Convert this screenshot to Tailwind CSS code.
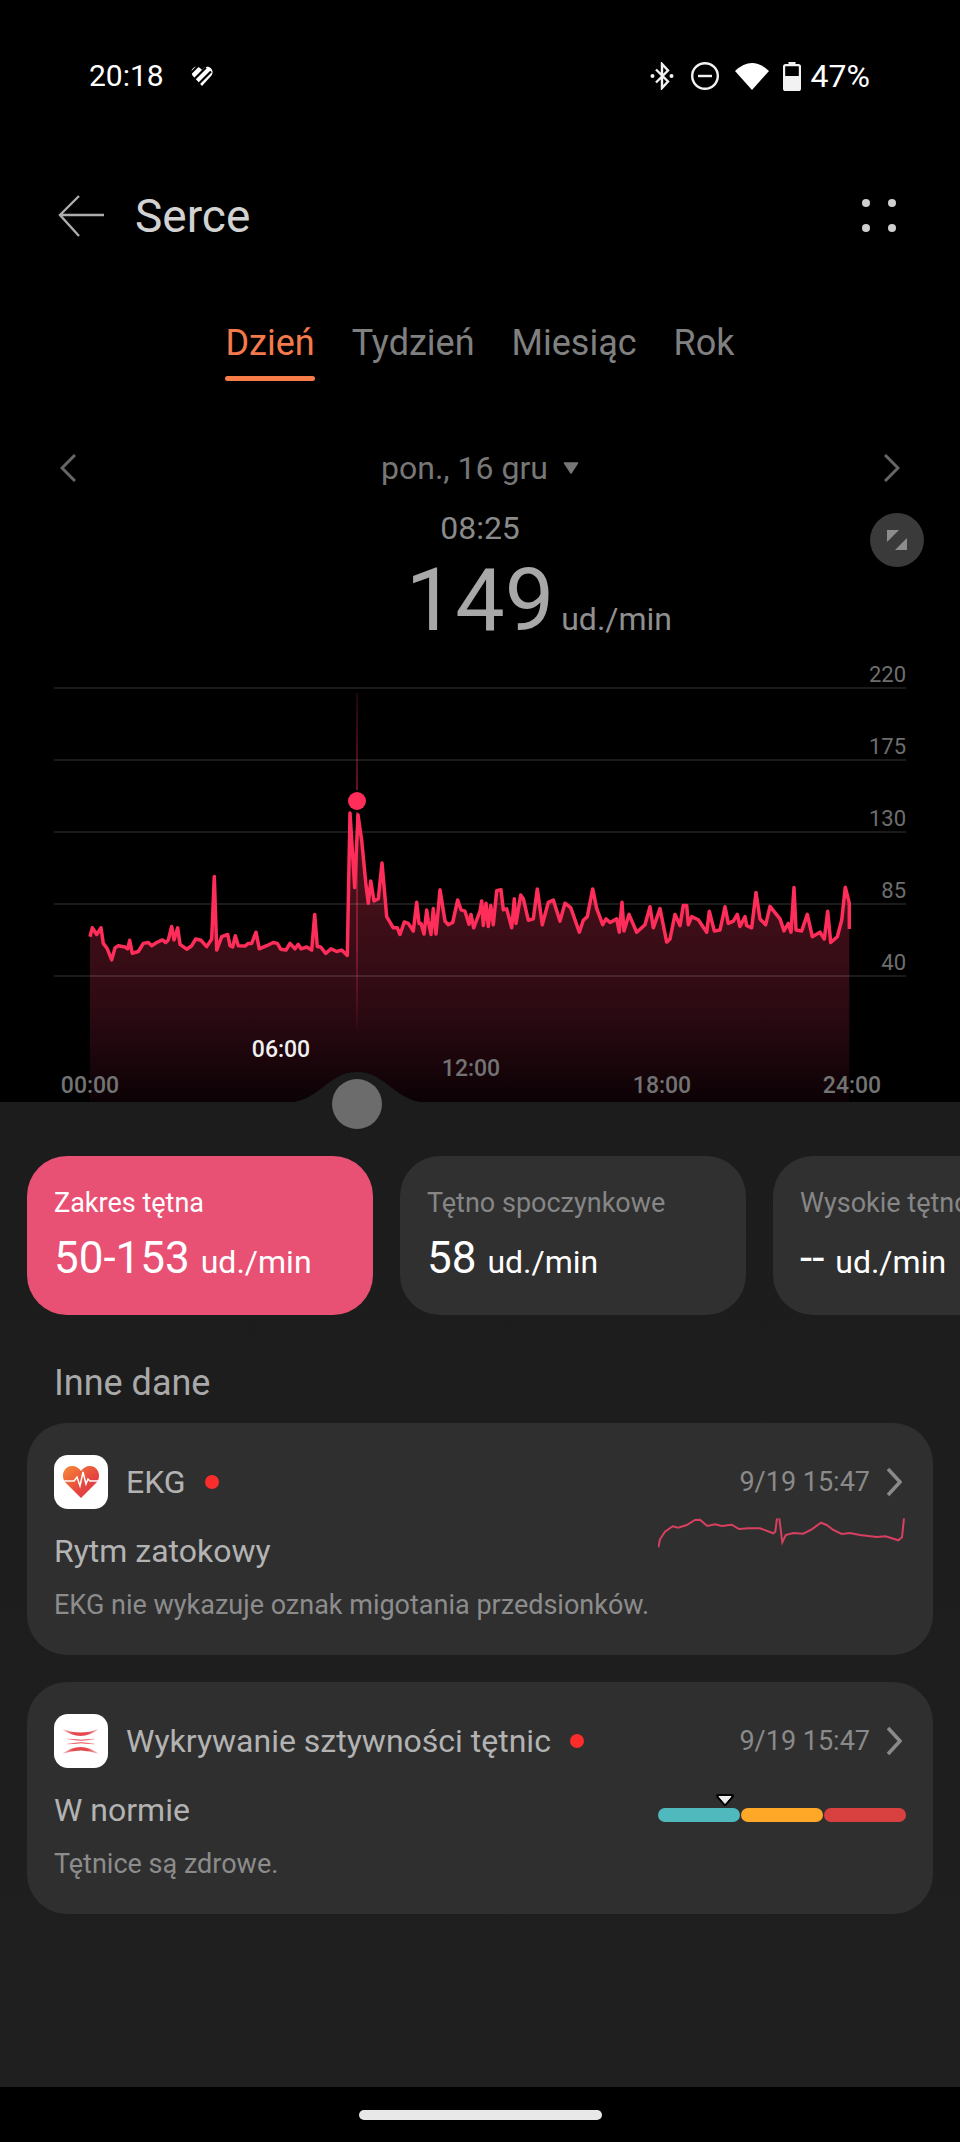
<!DOCTYPE html>
<html lang="pl">
<head>
  <meta charset="UTF-8" />
  <meta name="viewport" content="width=device-width, initial-scale=1.0"/>
  <title>Serce</title>
  <script src="https://cdn.jsdelivr.net/npm/@tailwindcss/browser@4"></script>
</head>
<body class="bg-black">
<div class="w-[960px] h-[2142px] flex flex-col bg-black overflow-hidden font-['Roboto',sans-serif]">

  <!-- Status bar -->
  <div class="h-[100px] pt-[52px] pl-[89px] pr-[90px] flex items-center text-white">
    <span class="text-[30px] leading-[36px]">20:18</span>
    <svg class="ml-[26px]" width="24" height="22" viewBox="0 0 24 22">
      <path d="M12 21 L2.5 10.5 C-1 6 4.500 -1 10 3 L12 5 L14 3 C19.500 -1 25 6 21.500 10.500 Z" fill="#fff"/>
      <path d="M0 9 L8 1 M3 15.500 L16 2.500 M7.500 20 L21 6.500" stroke="#000" stroke-width="2.200"/>
    </svg>
    <svg class="ml-auto" width="24" height="28" viewBox="0 0 24 28" fill="none">
      <path d="M6 7.500 L18 19.500 L12 26 V2 L18 8.500 L6 20.500" stroke="#f2f2f2" stroke-width="2.400"/>
      <circle cx="2.500" cy="14" r="2" fill="#f2f2f2"/>
      <circle cx="21.500" cy="14" r="2" fill="#f2f2f2"/>
    </svg>
    <svg class="ml-[17px]" width="28" height="28" viewBox="0 0 28 28" fill="none">
      <circle cx="14" cy="14" r="12.800" stroke="#f2f2f2" stroke-width="2.400"/>
      <rect x="7" y="12.800" width="14" height="2.400" fill="#f2f2f2"/>
    </svg>
    <svg class="ml-[16px]" width="34" height="28" viewBox="0 0 34 28">
      <path d="M0 9 Q17 -7 34 9 L17 28 Z" fill="#fff"/>
    </svg>
    <svg class="ml-[14px]" width="18" height="29" viewBox="0 0 18 29" fill="none">
      <rect x="5.500" y="0" width="7" height="3" fill="#f2f2f2"/>
      <rect x="1.100" y="3.100" width="15.800" height="24.800" rx="1.500" stroke="#f2f2f2" stroke-width="2.200"/>
      <rect x="1" y="14" width="16" height="14" rx="1.500" fill="#f2f2f2"/>
    </svg>
    <span class="ml-[10px] text-[32px] leading-[36px]">47%</span>
  </div>

  <!-- Header -->
  <header class="mt-[56px] h-[120px] pl-[58px] pr-[64px] flex items-center">
    <svg width="46" height="42" viewBox="0 0 46 42" fill="none" stroke="#adadad" stroke-width="2.400">
      <path d="M21 1 L2 20 L21 41 M2 20 H46"/>
    </svg>
    <h1 class="ml-[31px] text-[46px] leading-[52px] text-[#d2d2d2] font-normal">Serce</h1>
    <svg class="ml-auto" width="34" height="34" viewBox="0 0 34 34" fill="#cfcfcf">
      <circle cx="4" cy="4" r="4"/><circle cx="30" cy="4" r="4"/>
      <circle cx="4" cy="29" r="4"/><circle cx="30" cy="29" r="4"/>
    </svg>
  </header>

  <!-- Tabs -->
  <nav class="mt-[46px] flex justify-center gap-[37px] text-[36px] leading-[42px] text-[#808080]">
    <div class="flex flex-col items-stretch">
      <span class="text-[#f4794b]">Dzień</span>
      <span class="mt-[12px] h-[5px] rounded-full bg-[#f67d47]"></span>
    </div>
    <span>Tydzień</span>
    <span>Miesiąc</span>
    <span>Rok</span>
  </nav>

  <!-- Date and selected value -->
  <div class="mt-[59px] h-[56px] px-[60px] flex items-center justify-between text-[#777]">
    <svg width="16" height="28" viewBox="0 0 16 28" fill="none" stroke="#666" stroke-width="3"><path d="M15 1 L2 14 L15 27"/></svg>
    <div class="flex items-center gap-[15px] text-[32px] leading-[36px]">
      <span>pon., 16 gru</span>
      <svg width="16" height="12" viewBox="0 0 16 12"><path d="M1.500 1 H14.500 L8 11 Z" fill="#777" stroke="#777" stroke-width="1.500" stroke-linejoin="round"/></svg>
    </div>
    <svg width="16" height="28" viewBox="0 0 16 28" fill="none" stroke="#666" stroke-width="3"><path d="M1 1 L14 14 L1 27"/></svg>
  </div>

  <div class="relative">
    <div class="mt-[14px] text-center text-[32px] leading-[36px] text-[#8a8a8a]">08:25</div>
    <div class="mt-[6px] grid grid-cols-[1fr_auto_1fr] items-baseline">
      <span></span>
      <span class="text-[88px] leading-[96px] text-[#a8a8a8]">149</span>
      <span class="pl-[7px] text-[32px] leading-[36px] text-[#8f8f8f]">ud./min</span>
    </div>
    <button class="absolute right-[36px] top-[17px] w-[54px] h-[54px] rounded-full bg-[#3a3a3a] flex items-center justify-center">
      <svg width="22" height="22" viewBox="0 0 22 22" fill="#8c8c8c">
        <path d="M1 1 H13 L1 13 Z"/><path d="M21 21 H9 L21 9 Z"/>
      </svg>
    </button>
  </div>

  <!-- Chart -->
  <section class="relative z-10 mt-[16px] h-[438px]">
    <svg class="absolute left-0 -top-[14px]" width="960" height="484" viewBox="0 650 960 484" font-family="Roboto, sans-serif">
      <defs>
        <linearGradient id="areaFill" gradientUnits="userSpaceOnUse" x1="0" y1="890" x2="0" y2="1100">
          <stop offset="0" stop-color="#441019"/>
          <stop offset="0.55" stop-color="#2e0a13"/>
          <stop offset="1" stop-color="#0c0205"/>
        </linearGradient>
        <linearGradient id="cursorLine" gradientUnits="userSpaceOnUse" x1="0" y1="690" x2="0" y2="1030">
          <stop offset="0" stop-color="#ff2d5a" stop-opacity="0.15"/>
          <stop offset="0.3" stop-color="#ff2d5a" stop-opacity="0.55"/>
          <stop offset="0.75" stop-color="#ff2d5a" stop-opacity="0.5"/>
          <stop offset="1" stop-color="#ff2d5a" stop-opacity="0.05"/>
        </linearGradient>
      </defs>

      <!-- filled area, points taken in 3x / 2.24x crop coordinates -->
      <path fill="url(#areaFill)" d="M90 1102 V936.700 L92.300 927.800 L96.700 934.500 L101 927.800 L103.300 943.400 L107.300 948.800 L111.700 959.900 L115 947.900 L118.300 945.700 L125 947 L127.700 948.800 L129.700 940.300 L132.300 953.300 L138.300 951.500 L143.300 943.400 L148.300 942.500 L151.700 945.700 L156.700 942.500 L162.300 939.900 L165.700 942.500 L168.300 939.900 L171.700 926.500 L174 939.900 L177.700 927.800 L180 944.300 L186.700 949.200 L191.700 945.700 L195.700 939 L201 940.300 L206.700 946.600 L211.700 939 L214.300 876.400 L216.700 950.100 L221.700 936.700 L227.700 934.500 L230 945.700 L232.700 947 L235.300 935.800 L238.300 945.700 L245 946.100 L248.300 943.400 L251.700 943.400 L256 932.200 L259.300 948.800 L266.700 945.700 L273.300 942.500 L277.300 943.400 L280.700 949.200 L286 950.100 L290 943.400 L295 948.800 L298.300 944.300 L301 948.800 L306.700 947 L311.700 950.100 L314.700 914.400 L317.300 946.600 L320.700 947 L325.700 953.300 L331 948.800 L336.700 951.500 L341.700 950.100 L347.300 955.400 L350 813 L354.700 887.600 L358 814.800 L361.700 840.700 L366 885.300 L368.300 903.200 L370.700 880.900 L374 900.900 L378.300 898.700 L382 863 L386.700 916.600 L393.300 927.800 L397.300 927.800 L400 934.500 L404.300 922 L408.300 923.400 L413.300 931 L416.700 902.300 L419 923.400 L421 923.400 L424 934 L426.700 910 L428.300 921.100 L431 934.500 L433.300 908.600 L436 934 L440 889.800 L445 921.100 L448.300 924.700 L452.700 922.500 L457.700 900 L461 909.800 L465 911.200 L469 924.300 L471 914.400 L473.700 927.800 L480 911.200 L481.700 900.900 L483.300 925.600 L486 903.200 L488.300 926.500 L490.700 905.400 L493.300 924.700 L496.700 890.700 L501 889.800 L503.300 909.800 L506.700 908.900 L511.700 927.800 L514.300 898.700 L516 923.400 L520.700 895.100 L523.300 898.700 L528.300 920.200 L533.300 918.900 L537.300 888.900 L542.300 924.700 L548.300 902.300 L553.300 900 L560 921.100 L565 903.200 L570.700 907.700 L579.300 932.200 L583.300 920.200 L587.300 916.600 L592.700 888.900 L596.700 908.600 L602.700 924.700 L606 918.900 L610 922.500 L616.700 918.900 L619.300 932.200 L622 902.300 L624 930.900 L629 914.400 L636.700 932.200 L645 924.700 L650 906.800 L653.300 927.800 L660 908.600 L666.700 942.100 L670 939 L675 914.400 L680 925.600 L683.300 905.400 L686.700 905.400 L688.300 924.700 L691.700 916.600 L698.300 919.800 L706.700 932.200 L709.300 911.200 L714.300 930.900 L720 930 L725 906.800 L728.300 923.400 L733.300 921.100 L737.300 914.400 L740 926.500 L745 916.600 L746.700 925.600 L751.700 927.800 L756 892.500 L760 918.900 L765.700 924.700 L770 906.400 L780 918.900 L784 930.900 L788.300 923.400 L791 932.200 L794 887.600 L796 930 L801.700 930.900 L807.300 914.400 L812.300 936.700 L820 932.200 L824.300 939 L827.700 911.200 L830.700 942.500 L837.300 936.700 L841.700 920.200 L845.300 887.200 L849.300 903.200 V1102 Z"/>

      <!-- grid lines -->
      <g stroke="#fff" stroke-opacity="0.14" stroke-width="1.500">
        <line x1="54" y1="688" x2="906" y2="688"/>
        <line x1="54" y1="760" x2="906" y2="760"/>
        <line x1="54" y1="832" x2="906" y2="832"/>
        <line x1="54" y1="904" x2="906" y2="904"/>
        <line x1="54" y1="976" x2="906" y2="976"/>
      </g>

      <!-- cursor -->
      <line x1="357" y1="693" x2="357" y2="1030" stroke="url(#cursorLine)" stroke-width="1.500"/>

      <!-- heart rate line -->
      <polyline fill="none" stroke="#ff2d5a" stroke-width="3.500" stroke-linejoin="round" points="90,936.700 92.300,927.800 96.700,934.500 101,927.800 103.300,943.400 107.300,948.800 111.700,959.900 115,947.900 118.300,945.700 125,947 127.700,948.800 129.700,940.300 132.300,953.300 138.300,951.500 143.300,943.400 148.300,942.500 151.700,945.700 156.700,942.500 162.300,939.900 165.700,942.500 168.300,939.900 171.700,926.500 174,939.900 177.700,927.800 180,944.300 186.700,949.200 191.700,945.700 195.700,939 201,940.300 206.700,946.600 211.700,939 214.300,876.400 216.700,950.100 221.700,936.700 227.700,934.500 230,945.700 232.700,947 235.300,935.800 238.300,945.700 245,946.100 248.300,943.400 251.700,943.400 256,932.200 259.300,948.800 266.700,945.700 273.300,942.500 277.300,943.400 280.700,949.200 286,950.100 290,943.400 295,948.800 298.300,944.300 301,948.800 306.700,947 311.700,950.100 314.700,914.400 317.300,946.600 320.700,947 325.700,953.300 331,948.800 336.700,951.500 341.700,950.100 347.300,955.400 350,813 354.700,887.600 358,814.800 361.700,840.700 366,885.300 368.300,903.200 370.700,880.900 374,900.900 378.300,898.700 382,863 386.700,916.600 393.300,927.800 397.300,927.800 400,934.500 404.300,922 408.300,923.400 413.300,931 416.700,902.300 419,923.400 421,923.400 424,934 426.700,910 428.300,921.100 431,934.500 433.300,908.600 436,934 440,889.800 445,921.100 448.300,924.700 452.700,922.500 457.700,900 461,909.800 465,911.200 469,924.300 471,914.400 473.700,927.800 480,911.200 481.700,900.900 483.300,925.600 486,903.200 488.300,926.500 490.700,905.400 493.300,924.700 496.700,890.700 501,889.800 503.300,909.800 506.700,908.900 511.700,927.800 514.300,898.700 516,923.400 520.700,895.100 523.300,898.700 528.300,920.200 533.300,918.900 537.300,888.900 542.300,924.700 548.300,902.300 553.300,900 560,921.100 565,903.200 570.700,907.700 579.300,932.200 583.300,920.200 587.300,916.600 592.700,888.900 596.700,908.600 602.700,924.700 606,918.900 610,922.500 616.700,918.900 619.300,932.200 622,902.300 624,930.900 629,914.400 636.700,932.200 645,924.700 650,906.800 653.300,927.800 660,908.600 666.700,942.100 670,939 675,914.400 680,925.600 683.300,905.400 686.700,905.400 688.300,924.700 691.700,916.600 698.300,919.800 706.700,932.200 709.300,911.200 714.300,930.900 720,930 725,906.800 728.300,923.400 733.300,921.100 737.300,914.400 740,926.500 745,916.600 746.700,925.600 751.700,927.800 756,892.500 760,918.900 765.700,924.700 770,906.400 780,918.900 784,930.900 788.300,923.400 791,932.200 794,887.600 796,930 801.700,930.900 807.300,914.400 812.300,936.700 820,932.200 824.300,939 827.700,911.200 830.700,942.500 837.300,936.700 841.700,920.200 845.300,887.200 849.300,903.200 849.300,929"/>

      <circle cx="357" cy="801" r="11" fill="#000"/>
      <circle cx="357" cy="801" r="9" fill="#ff2d5a"/>

      <!-- axis labels -->
      <g font-size="22" fill="#6e6e6e" text-anchor="end">
        <text x="906" y="682">220</text>
        <text x="906" y="754">175</text>
        <text x="906" y="826">130</text>
        <text x="906" y="898">85</text>
        <text x="906" y="970">40</text>
      </g>
      <g font-size="23" fill="#737373" font-weight="500" text-anchor="middle">
        <text x="90" y="1093">00:00</text>
        <text x="471" y="1076">12:00</text>
        <text x="662" y="1093">18:00</text>
        <text x="852" y="1093">24:00</text>
      </g>
      <text x="281" y="1057" font-size="23" font-weight="500" fill="#f0f0f0" text-anchor="middle">06:00</text>

      <!-- slider -->
      <path d="M283 1103 C320 1103 327 1072 357 1072 C387 1072 394 1103 431 1103 Z" fill="#1c1c1c"/>
      <circle cx="357" cy="1104" r="25" fill="#6c6c6c"/>
    </svg>
  </section>

  <!-- Lower panel -->
  <main class="flex-1 bg-linear-to-b from-[#1c1c1c] to-[#1f1f1f] pt-[54px]">
    <div class="flex gap-[27px] pl-[27px] overflow-hidden">
      <div class="w-[346px] h-[159px] shrink-0 rounded-[40px] bg-[#e85174] pl-[27px] pt-[31px] text-white">
        <p class="text-[27px] leading-[32px]">Zakres tętna</p>
        <p class="mt-[13px] text-[44px] leading-[52px]">50-153 <span class="text-[32px]">ud./min</span></p>
      </div>
      <div class="w-[346px] h-[159px] shrink-0 rounded-[40px] bg-[#303030] pl-[27px] pt-[31px] text-white">
        <p class="text-[27px] leading-[32px] text-[#868686]">Tętno spoczynkowe</p>
        <p class="mt-[13px] text-[44px] leading-[52px]">58 <span class="text-[32px]">ud./min</span></p>
      </div>
      <div class="w-[346px] h-[159px] shrink-0 rounded-[40px] bg-[#303030] pl-[27px] pt-[31px] text-white">
        <p class="text-[27px] leading-[32px] text-[#868686] whitespace-nowrap">Wysokie tętno spoczynkowe</p>
        <p class="mt-[13px] text-[44px] leading-[52px]">-- <span class="text-[32px]">ud./min</span></p>
      </div>
    </div>

    <h2 class="mt-[48px] mb-[20px] pl-[54px] text-[36px] leading-[40px] text-[#a9a9a9] font-normal">Inne dane</h2>

    <!-- EKG -->
    <div class="mx-[27px] h-[232px] rounded-[40px] bg-[#2f2f2f] px-[27px] pt-[32px]">
      <div class="flex items-center h-[54px]">
        <div class="w-[54px] h-[54px] rounded-[14px] bg-white flex items-center justify-center">
          <svg width="38" height="34" viewBox="0 0 38 34">
            <defs>
              <linearGradient id="heartFill" x1="0" y1="0" x2="1" y2="1">
                <stop offset="0" stop-color="#f68a35"/>
                <stop offset="0.6" stop-color="#e6453f"/>
                <stop offset="1" stop-color="#d83a4b"/>
              </linearGradient>
            </defs>
            <path d="M19 33 L3.500 17.500 C-2 11 2 1 10 1 C14 1 17 3 19 6 C21 3 24 1 28 1 C36 1 40 11 34.500 17.500 Z" fill="url(#heartFill)"/>
            <path d="M0 16 H12 L15 12 L18 21 L21 7 L24 19 L26 14 L28 16 H38" fill="none" stroke="#fff" stroke-width="1.500"/>
          </svg>
        </div>
        <span class="ml-[18px] text-[32px] leading-[38px] text-[#b3b3b3]">EKG</span>
        <span class="ml-[19px] w-[14px] h-[14px] rounded-full bg-[#fb2c2c]"></span>
        <span class="ml-auto text-[27px] leading-[32px] text-[#8a8a8a]">9/19 15:47</span>
        <svg class="ml-[16px] mr-[4px]" width="16" height="30" viewBox="0 0 16 30" fill="none" stroke="#8a8a8a" stroke-width="3.500"><path d="M2 2 L14 15 L2 28"/></svg>
      </div>
      <div class="mt-[23px] flex justify-between items-start">
        <p class="text-[32px] leading-[38px] text-[#b3b3b3]">Rytm zatokowy</p>
        <svg class="-mt-[20px]" width="248" height="36" viewBox="658 1512 248 36" fill="none" stroke="#d8405f" stroke-width="2">
          <path d="M658.300 1547.300 L660 1539.300 L665 1531.700 L672.700 1526.300 L678.300 1527.700 L686.700 1525 L695 1520 L700 1519.700 L707.300 1526 L715 1524.300 L721.700 1526 L731.700 1524.700 L739 1529 L748.300 1528.300 L760 1528.300 L773.300 1533.300 L775.300 1531.700 L777 1518.300"/>
          <path d="M779.300 1518.300 L782.300 1542.300 L785.700 1535 L793.300 1533 L803.300 1533.700 L811.700 1529.300 L821 1522.700 L826.700 1525 L833.300 1530 L841.700 1534 L850 1533 L860 1535 L876.700 1537 L885.700 1536.300 L898.300 1540.300 L902 1537.300 L904 1518.300"/>
        </svg>
      </div>
      <p class="mt-[20px] text-[27px] leading-[30px] text-[#8c8c8c]">EKG nie wykazuje oznak migotania przedsionków.</p>
    </div>

    <!-- Arterial stiffness -->
    <div class="mt-[27px] mx-[27px] h-[232px] rounded-[40px] bg-[#2f2f2f] px-[27px] pt-[32px]">
      <div class="flex items-center h-[54px]">
        <div class="w-[54px] h-[54px] rounded-[14px] bg-white">
          <svg width="54" height="54" viewBox="0 0 54 54">
            <defs>
              <linearGradient id="arcFill" x1="0" y1="0" x2="1" y2="0">
                <stop offset="0" stop-color="#e5484d" stop-opacity="0.25"/>
                <stop offset="0.3" stop-color="#e5484d"/>
                <stop offset="0.7" stop-color="#e5484d"/>
                <stop offset="1" stop-color="#e5484d" stop-opacity="0.25"/>
              </linearGradient>
            </defs>
            <path d="M8 15 Q26.500 22 45 15 Q26.500 29 8 15 Z" fill="url(#arcFill)"/>
            <path d="M8 40 Q26.500 33 45 40 Q26.500 26 8 40 Z" fill="url(#arcFill)"/>
            <path d="M13 25 Q27 27.500 41 25 M13 30 Q27 27.500 41 30" fill="none" stroke="url(#arcFill)" stroke-width="1"/>
          </svg>
        </div>
        <span class="ml-[18px] text-[32px] leading-[38px] text-[#b3b3b3]">Wykrywanie sztywności tętnic</span>
        <span class="ml-[19px] w-[14px] h-[14px] rounded-full bg-[#fb2c2c]"></span>
        <span class="ml-auto text-[27px] leading-[32px] text-[#8a8a8a]">9/19 15:47</span>
        <svg class="ml-[16px] mr-[4px]" width="16" height="30" viewBox="0 0 16 30" fill="none" stroke="#8a8a8a" stroke-width="3.500"><path d="M2 2 L14 15 L2 28"/></svg>
      </div>
      <div class="mt-[23px] flex justify-between items-start">
        <p class="text-[32px] leading-[38px] text-[#b3b3b3]">W normie</p>
        <div class="w-[248px] pt-[2px]">
          <svg class="ml-[57px]" width="20" height="14" viewBox="0 0 20 14" stroke-linejoin="round">
            <path d="M3 3 H17 L10 11 Z" fill="#000" stroke="#000" stroke-width="4"/>
            <path d="M4 3.500 H16 L10 10.500 Z" fill="#ececec" stroke="#ececec" stroke-width="1"/>
          </svg>
          <div class="mt-[1px] flex gap-[1px] h-[14px]">
            <span class="flex-1 rounded-full bg-[#4fb9be]"></span>
            <span class="flex-1 rounded-full bg-[#ffa726]"></span>
            <span class="flex-1 rounded-full bg-[#d94141]"></span>
          </div>
        </div>
      </div>
      <p class="mt-[20px] text-[27px] leading-[30px] text-[#8c8c8c]">Tętnice są zdrowe.</p>
    </div>
  </main>

  <!-- Gesture bar -->
  <div class="h-[55px] bg-black flex items-center justify-center">
    <span class="w-[243px] h-[10px] rounded-full bg-[#e8e8e8]"></span>
  </div>
</div>
</body>
</html>
